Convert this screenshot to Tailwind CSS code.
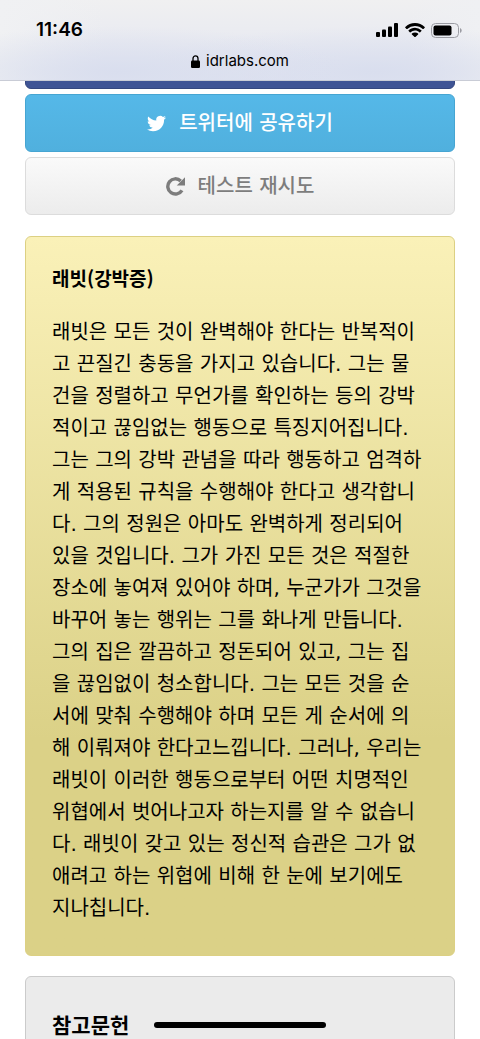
<!DOCTYPE html>
<html lang="ko">

<head>
    <meta charset="UTF-8">
    <meta name="viewport" content="width=device-width, initial-scale=1.0">
    <title>래빗(강박증)</title>
    <script src="https://cdn.jsdelivr.net/npm/@tailwindcss/browser@4"></script>
</head>

<body class="relative h-screen overflow-hidden bg-white text-black font-['Noto_Sans_CJK_KR',sans-serif]">

    <!-- 상단 바 -->
    <header class="absolute inset-x-0 top-0 z-10 h-[81px] border-b border-[#c9ccd6] bg-[#e6e8f2] bg-[radial-gradient(ellipse_at_25%_90%,#d9deee_0%,transparent_45%),radial-gradient(ellipse_at_78%_90%,#d9deee_0%,transparent_45%),linear-gradient(to_right,#f0f1f3,transparent_22%,transparent_85%,#eff0f3),linear-gradient(to_bottom,#f0f0f1,#e2e5f1)] font-[Inter,sans-serif]">
        <div class="flex items-center justify-between pt-[18px] pr-[18px] pl-9">
            <span class="text-[19px] leading-6 font-semibold">11:46</span>
            <div class="flex items-center gap-[6px]">
                <svg class="h-[14px] w-[23px]" viewBox="0 0 23 14">
                    <rect x="0" y="9" width="4" height="5" rx="1" />
                    <rect x="6" y="6.500" width="4" height="7.500" rx="1" />
                    <rect x="12" y="3.500" width="4" height="10.500" rx="1" />
                    <rect x="18" y="0" width="4" height="14" rx="1" />
                </svg>
                <svg class="h-[14px] w-5" viewBox="0 0 20 14">
                    <path d="M10 0C6.200 0 2.800 1.500.300 3.900a.6.6 0 0 0 0 .8l1.200 1.200a.6.6 0 0 0 .8 0A11 11 0 0 1 10 2.900c3 0 5.700 1.100 7.700 3a.6.6 0 0 0 .8 0l1.200-1.200a.6.6 0 0 0 0-.8A14 14 0 0 0 10 0z" />
                    <path d="M10 4.800c-2.500 0-4.700 1-6.400 2.500a.6.6 0 0 0 0 .8l1.200 1.200a.6.6 0 0 0 .8 0A6.500 6.500 0 0 1 10 7.600c1.700 0 3.200.6 4.400 1.700a.6.6 0 0 0 .8 0l1.200-1.200a.6.6 0 0 0 0-.8A9.400 9.400 0 0 0 10 4.800z" />
                    <path d="M10 9.400c-1.200 0-2.300.4-3.100 1.200a.6.6 0 0 0 0 .8l2.700 2.500a.6.6 0 0 0 .8 0l2.700-2.500a.6.6 0 0 0 0-.8A4.500 4.500 0 0 0 10 9.400z" />
                </svg>
                <svg class="h-[15px] w-[31px]" viewBox="0 0 31 15">
                    <rect x=".5" y=".5" width="27" height="14" rx="4" fill="none" stroke="#9b9ca3" />
                    <rect x="2.500" y="2.500" width="18" height="10" rx="2" />
                    <path d="M29 5v5c1-.4 1.700-1.400 1.700-2.500S30 5.400 29 5z" fill="#9b9ca3" />
                </svg>
            </div>
        </div>
        <div class="mt-[9px] flex items-center justify-center gap-[6px]">
            <svg class="h-[13px] w-[9px]" viewBox="0 0 9 13">
                <rect x="0" y="5.500" width="9" height="7.500" rx="1.200" />
                <path d="M2 6V3.500a2.500 2.700 0 0 1 5 0V6" fill="none" stroke="#000" stroke-width="1.300" />
            </svg>
            <span class="text-[15px] leading-5">idrlabs.com</span>
        </div>
    </header>

    <main class="px-[25px] pt-[31px]">
        <!-- 공유 버튼 -->
        <div class="flex flex-col gap-[5px]">
            <button aria-label="페이스북에 공유하기" class="h-[58px] rounded-md border border-[#35477f] bg-[#3f5495]"></button>
            <button class="flex h-[58px] items-center justify-center gap-[13px] rounded-md border border-[#46a5d2] bg-linear-to-b from-[#55b8e8] to-[#50b0de] font-['DejaVu_Sans','Noto_Sans_CJK_KR',sans-serif] text-xl font-medium text-white">
                <svg class="size-[19px]" viewBox="0 0 24 24" fill="currentColor">
                    <path d="M23.950 4.570a10 10 0 0 1-2.820.77 4.960 4.960 0 0 0 2.160-2.720c-.95.55-2 .95-3.130 1.180a4.920 4.920 0 0 0-8.380 4.480C7.690 8.090 4.070 6.130 1.640 3.160a4.820 4.820 0 0 0-.67 2.480c0 1.710.87 3.210 2.190 4.100a4.900 4.900 0 0 1-2.230-.62v.06a4.920 4.920 0 0 0 3.950 4.830 5 5 0 0 1-2.210.08 4.940 4.940 0 0 0 4.600 3.420A9.870 9.870 0 0 1 0 19.540a13.990 13.990 0 0 0 7.560 2.210c9.050 0 14-7.500 14-13.980 0-.21 0-.42-.02-.63a9.940 9.940 0 0 0 2.460-2.550z" />
                </svg>
                트위터에 공유하기
            </button>
            <button class="flex h-[58px] items-center justify-center gap-[13px] rounded-md border border-[#dcdcdc] bg-linear-to-b from-[#fafafa] to-[#ececec] font-['DejaVu_Sans','Noto_Sans_CJK_KR',sans-serif] text-xl font-medium text-[#7d7d7d]">
                <svg class="size-[19px]" viewBox="0 0 20 20" fill="none">
                    <path d="M16.800 14A8 8 0 1 1 15.500 4.200" stroke="currentColor" stroke-width="3.600" />
                    <path d="M20 .3v8.700h-8.700z" fill="currentColor" />
                </svg>
                테스트 재시도
            </button>
        </div>

        <!-- 결과 설명 -->
        <section class="mt-[21px] rounded-md border border-[#dcd083] bg-linear-to-b from-[#faf1b8] to-[#dbd187] to-70% px-[26px] pt-[25px] pb-[31px]">
            <h2 class="text-[19px] leading-8 font-bold">래빗(강박증)</h2>
            <p class="mt-[22px] font-['DejaVu_Sans','Noto_Sans_CJK_KR',sans-serif] text-xl leading-8 whitespace-nowrap">
                래빗은 모든 것이 완벽해야 한다는 반복적이<br>
                고 끈질긴 충동을 가지고 있습니다. 그는 물<br>
                건을 정렬하고 무언가를 확인하는 등의 강박<br>
                적이고 끊임없는 행동으로 특징지어집니다.<br>
                그는 그의 강박 관념을 따라 행동하고 엄격하<br>
                게 적용된 규칙을 수행해야 한다고 생각합니<br>
                다. 그의 정원은 아마도 완벽하게 정리되어<br>
                있을 것입니다. 그가 가진 모든 것은 적절한<br>
                장소에 놓여져 있어야 하며, 누군가가 그것을<br>
                바꾸어 놓는 행위는 그를 화나게 만듭니다.<br>
                그의 집은 깔끔하고 정돈되어 있고, 그는 집<br>
                을 끊임없이 청소합니다. 그는 모든 것을 순<br>
                서에 맞춰 수행해야 하며 모든 게 순서에 의<br>
                해 이뤄져야 한다고느낍니다. 그러나, 우리는<br>
                래빗이 이러한 행동으로부터 어떤 치명적인<br>
                위협에서 벗어나고자 하는지를 알 수 없습니<br>
                다. 래빗이 갖고 있는 정신적 습관은 그가 없<br>
                애려고 하는 위협에 비해 한 눈에 보기에도<br>
                지나칩니다.
            </p>
        </section>

        <!-- 참고문헌 -->
        <section class="mt-5 rounded-md border border-[#cbcbcb] bg-[#ebebeb] px-[26px] py-[31px]">
            <h2 class="text-[21px] leading-8 font-bold">참고문헌</h2>
        </section>
    </main>

    <!-- 홈 인디케이터 -->
    <div class="absolute bottom-[11px] left-1/2 z-10 h-[6px] w-[172px] -translate-x-1/2 rounded-full bg-black"></div>

</body>

</html>
